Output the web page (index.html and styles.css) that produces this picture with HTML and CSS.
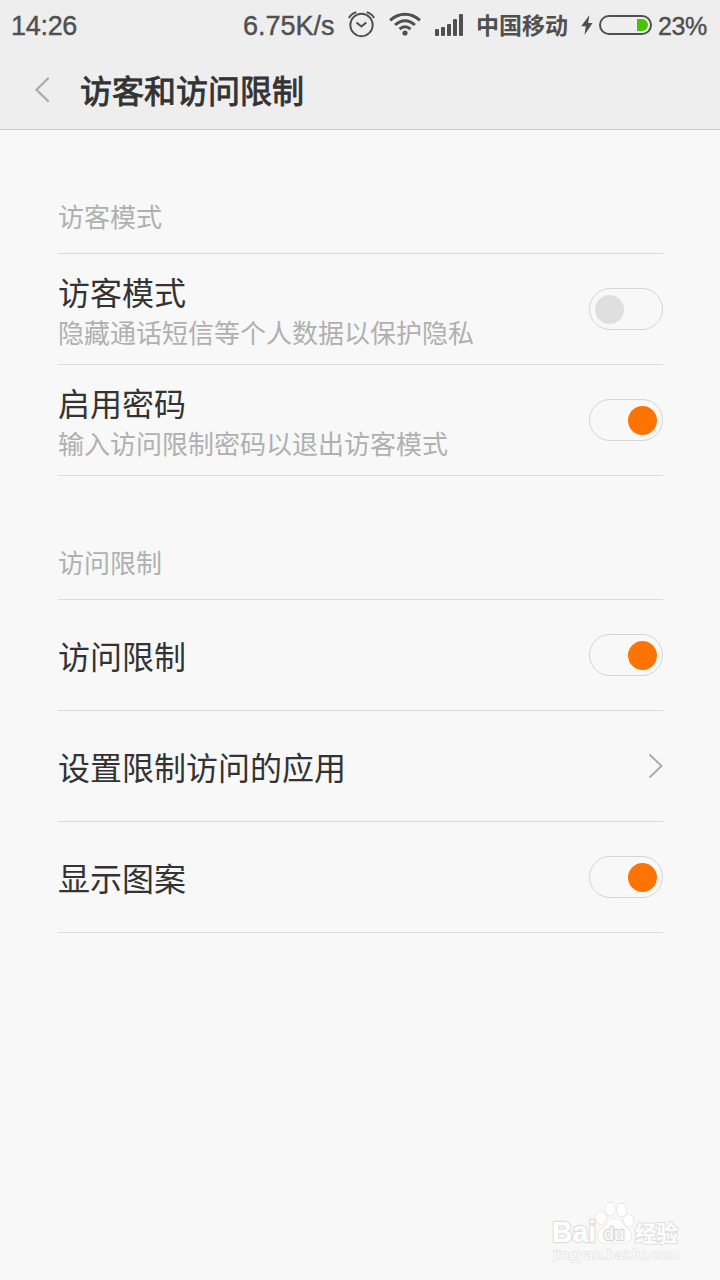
FILE: index.html
```html
<!DOCTYPE html>
<html lang="zh-CN">
<head>
<meta charset="utf-8">
<title>访客和访问限制</title>
<link rel="stylesheet" href="styles.css">
</head>
<body>
<header class="top">
  <div class="status">
    <span class="time">14:26</span>
    <span class="speed">6.75K/s</span>
    <svg class="alarm" width="28" height="28" viewBox="0 0 28 28" fill="none" stroke="#505050" stroke-width="1.9">
      <circle cx="13.500" cy="15" r="11.2"/>
      <path d="M8.500 12.5l4.900 4 4.900-4" stroke-width="2.1"/>
      <path d="M.9 8Q3 4 8.300 2.200M26.200 8Q24 4 18.700 2.200"/>
    </svg>
    <svg class="wifi" width="32" height="24" viewBox="0 0 32 24" fill="none" stroke="#505050" stroke-width="3">
      <path d="M1.1 8.3Q8 2.3 16 2.3T30.9 8.3"/>
      <path d="M6.1 13Q10.6 8.7 16 8.7T25.9 13"/>
      <path d="M10.5 17.2Q13 14.8 16 14.8T21.5 17.2"/>
      <circle cx="16" cy="21" r="2.6" fill="#505050" stroke="none"/>
    </svg>
    <svg class="signal" width="28" height="22" viewBox="0 0 28 22" fill="#505050">
      <rect x="0" y="15" width="4" height="7" rx="1"/>
      <rect x="6" y="13" width="4" height="9" rx="1"/>
      <rect x="12" y="10" width="4" height="12" rx="1"/>
      <rect x="18" y="5" width="4" height="17" rx="1"/>
      <rect x="24" y="0" width="4" height="22" rx="1"/>
    </svg>
    <span class="carrier">中国移动</span>
    <svg class="bolt" width="12" height="20" viewBox="0 0 12 20" fill="#505050"><path d="M8.5 0L.2 11.3h4.6L3.5 20 11.6 8H7.1z"/></svg>
    <svg class="battery" width="54" height="20" viewBox="0 0 54 20">
      <rect x="1" y="1" width="51" height="18" rx="9" fill="none" stroke="#505050" stroke-width="2"/>
      <path d="M38 4h5a6 6 0 0 1 0 12h-5z" fill="#46c400"/>
    </svg>
    <span class="percent">23%</span>
  </div>
  <div class="titlebar">
    <svg class="back" width="16" height="26" viewBox="0 0 16 26" fill="none" stroke="#aaa" stroke-width="2.2"><path d="M14.700 .8L2.500 12.800l12.200 12"/></svg>
    <h1 class="title">访客和访问限制</h1>
  </div>
</header>
<main class="content">
  <h2 class="label">访客模式</h2>
  <div class="row">
    <div class="texts"><div class="name">访客模式</div><div class="desc">隐藏通话短信等个人数据以保护隐私</div></div>
    <div class="switch"><div class="knob"></div></div>
  </div>
  <div class="row">
    <div class="texts"><div class="name">启用密码</div><div class="desc">输入访问限制密码以退出访客模式</div></div>
    <div class="switch on"><div class="knob"></div></div>
  </div>
  <h2 class="label">访问限制</h2>
  <div class="row single">
    <div class="name">访问限制</div>
    <div class="switch on"><div class="knob"></div></div>
  </div>
  <div class="row single">
    <div class="name">设置限制访问的应用</div>
    <svg class="arrow" width="15" height="26" viewBox="0 0 15 26" fill="none" stroke="#aaa" stroke-width="1.9"><path d="M1.500 1.500l12 11.500-12 11.500"/></svg>
  </div>
  <div class="row single">
    <div class="name">显示图案</div>
    <div class="switch on"><div class="knob"></div></div>
  </div>
</main>
<svg class="watermark" width="136" height="70" viewBox="0 0 136 70">
  <g class="mark">
    <text class="brand" x="3" y="45" font-size="29" textLength="44" lengthAdjust="spacingAndGlyphs">Bai</text>
    <ellipse cx="52" cy="21" rx="5" ry="6.2"/>
    <ellipse cx="61" cy="12" rx="4.8" ry="6.6"/>
    <ellipse cx="72.500" cy="13" rx="5" ry="6.6"/>
    <ellipse cx="79.700" cy="23.5" rx="4.8" ry="6.2"/>
    <path d="M65.500 22c5 0 7 3 9.500 6.200 3.500 4 7 5.500 7 10.500 0 6-5 7.500-9 7H58c-4 .5-9-1-9-7 0-5 4-6.500 7.500-10.500C58.500 25 60.500 22 65.500 22z"/>
    <text class="du" x="54.500" y="43" font-size="19" textLength="21" lengthAdjust="spacingAndGlyphs">du</text>
    <text class="cjk" x="86" y="43.500" font-size="21.500">经验</text>
    <text class="url" x="4" y="62" font-size="13.500" textLength="126" lengthAdjust="spacingAndGlyphs">jingyan.baidu.com</text>
  </g>
</svg>
</body>
</html>
```

FILE: styles.css
```css
* { box-sizing: border-box; }
body {
  margin: 0;
  width: 720px;
  height: 1280px;
  overflow: hidden;
  background: #f8f8f8;
  color: #333;
  font-family: "Liberation Sans", "Noto Sans CJK SC", sans-serif;
}
.top { height: 130px; background: #eee; border-bottom: 1px solid #ccc; }
.status {
  display: flex;
  align-items: flex-start;
  height: 50px;
  padding-left: 11px;
  color: #505050;
  white-space: nowrap;
}
.time, .speed, .percent { line-height: 30px; margin-top: 11px; -webkit-text-stroke: .4px #505050; }
.time { width: 232px; font-size: 27px; letter-spacing: -.3px; }
.speed { width: 105px; font-size: 27px; }
.alarm { margin-top: 10px; }
.wifi { margin: 12px 0 0 13px; }
.signal { margin: 14px 0 0 14px; }
.carrier {
  width: 92px;
  margin: 9px 0 0 13px;
  font: bold 23px/30px "Noto Sans CJK SC", sans-serif;
}
.bolt { margin: 15px 0 0 13px; }
.battery { margin: 15px 0 0 6px; }
.percent { margin-left: 5px; font-size: 25px; letter-spacing: -.4px; }
.titlebar { display: flex; align-items: center; height: 79px; padding-left: 34px; }
.back { margin-right: 30px; }
.title {
  margin: -2px 0 0;
  font: 400 32px/48px "Noto Sans CJK SC", sans-serif;
  -webkit-text-stroke: .9px #333;
}
.content { padding: 0 57px 0 58px; font-family: "Noto Sans CJK SC", sans-serif; }
.label {
  height: 124px;
  margin: 0;
  padding-top: 66px;
  border-bottom: 1px solid #dcdcdc;
  font-weight: 400;
  font-size: 26px;
  line-height: 40px;
  color: #b0b0b0;
}
.row {
  display: flex;
  align-items: center;
  justify-content: space-between;
  height: 111px;
  border-bottom: 1px solid #dcdcdc;
}
.texts { padding-top: 4px; }
.name { font-size: 32px; line-height: 40px; }
.desc { padding-top: 1px; font-size: 26px; line-height: 40px; color: #b0b0b0; }
.switch {
  display: flex;
  align-items: center;
  width: 74px;
  height: 42px;
  padding: 0 5px;
  border: 1px solid #d5d5d5;
  border-radius: 21px;
}
.knob { width: 29px; height: 29px; border-radius: 50%; background: #dfdfdf; }
.on { justify-content: flex-end; }
.on .knob { background: #ff7300; }
.watermark { position: absolute; left: 549px; top: 1197px; }
.mark { fill: #fff; stroke: #dfdfdf; stroke-width: 1.2px; paint-order: stroke; }
.brand, .du { font-family: "Liberation Sans", sans-serif; font-weight: 700; stroke-width: 2.4px; }
.du { fill: #f8f8f8; stroke: #d8d8d8; }
.cjk { font-family: "Noto Sans CJK SC", sans-serif; font-weight: 700; stroke-width: 2px; }
.url { font-family: "Open Sans", sans-serif; stroke: #e6e6e6; stroke-width: 1.6px; }
```
